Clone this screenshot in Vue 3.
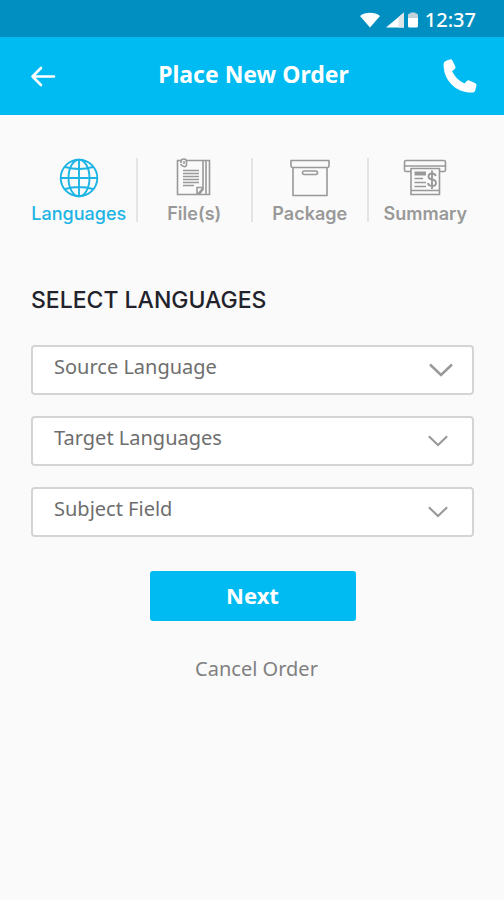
<script setup>
import { ref } from 'vue'

const steps = [
  { id: 'languages', label: 'Languages' },
  { id: 'files', label: 'File(s)' },
  { id: 'package', label: 'Package' },
  { id: 'summary', label: 'Summary' },
]
const current = ref('languages')

const fields = ref([
  { id: 'source', label: 'Source Language', value: '', large: true },
  { id: 'target', label: 'Target Languages', value: '', large: false },
  { id: 'subject', label: 'Subject Field', value: '', large: false },
])
</script>

<template>
  <div class="screen">
    <div class="status">
      <svg class="wifi" width="22" height="16" viewBox="0 0 22 16" aria-hidden="true">
        <path d="M1 4C6-.2 16-.2 21 4L11 15.500Z" fill="#fff" />
      </svg>
      <svg width="20" height="16" viewBox="0 0 20 16" aria-hidden="true">
        <path d="M1 15.500L19 0.500V15.500Z" fill="#fff" />
        <path d="M13.500 5.100L19 .5V15.500H13.500Z" fill="#dfe6ea" />
      </svg>
      <svg class="battery" width="12" height="16" viewBox="0 0 12 16" aria-hidden="true">
        <path d="M1 3Q1 1.500 2.500 1.500H3.500V.5H8.500V1.500H9.500Q11 1.500 11 3V6H1Z" fill="#c3d3dc" />
        <path d="M1 6H11V14Q11 15.500 9.500 15.500H2.500Q1 15.500 1 14Z" fill="#fff" />
      </svg>
      <span class="clock">12:37</span>
    </div>

    <header class="bar">
      <button class="icon-button" type="button" aria-label="Back">
        <svg width="26" height="22" viewBox="0 0 26 22" fill="none" stroke="#fff" stroke-width="2.600" stroke-linecap="round" stroke-linejoin="round">
          <path d="M24 11.500H2.500M11 3L2.500 11.500L11 20" />
        </svg>
      </button>
      <h1>Place New Order</h1>
      <button class="icon-button end" type="button" aria-label="Call">
        <svg width="34" height="34" viewBox="0 0 34 34" fill="#fff">
          <path d="M4.500 1.300L7 .4Q8.600 .1 9.400 1.500L12.300 7.600Q12.900 9 11.700 10.100L9.100 12.300C11.600 17.800 15.800 21.900 21.500 24.600L23.800 21.900Q24.800 20.800 26.200 21.400L32.400 24.200Q33.700 24.900 33.500 26.300L32.200 31.400Q31.700 33.200 29.800 33.400C13.500 34.300.2 21.500.6 5.200Q.7 2.400 4.500 1.300Z" />
        </svg>
      </button>
    </header>

    <nav class="steps" aria-label="Order steps">
      <button
        v-for="step in steps"
        :key="step.id"
        type="button"
        class="step"
        :class="{ active: step.id === current }"
        @click="current = step.id"
      >
        <svg v-if="step.id === 'languages'" width="40" height="40" viewBox="0 0 40 40" fill="none" stroke="currentColor" stroke-width="1.900">
          <circle cx="20" cy="20" r="18.300" />
          <ellipse cx="20" cy="20" rx="10.500" ry="18.300" />
          <path d="M20 1.700V38.300M1.700 20H38.300M6 9Q20 13 34 9M6 31Q20 27 34 31" />
        </svg>
        <svg v-else-if="step.id === 'files'" width="40" height="40" viewBox="0 0 40 40" fill="none" stroke="currentColor" stroke-width="1.600">
          <path d="M8 2.500H3.500V36.500H25L29 31.500V2.500H13M29 2.500H32V36.500H25M32 2.500H35.500V36.500H32" />
          <path d="M23 36V29.500H29M24 36L29 30" />
          <path d="M7 5V3.500Q7 1 9.800 1Q12.500 1 12.500 3.500V6.500Q12.500 9 10 8.500Q8 8 6.500 6M10 3V6" />
          <path d="M9 12.500H25M9 15.500H25M9 18.500H25M9 21.500H25M9 24.500H25M9 27.500H20" stroke-width="1.300" />
        </svg>
        <svg v-else-if="step.id === 'package'" width="40" height="40" viewBox="0 0 40 40" fill="none" stroke="currentColor" stroke-width="1.600" stroke-linejoin="round">
          <path d="M1 2.500H39V7.500Q39 9.500 37.500 9.500H2.500Q1 9.500 1 7.500Z" />
          <path d="M3 9.500V37.500H37V9.500" />
          <rect x="12.500" y="13" width="15" height="3.500" rx="1.700" />
        </svg>
        <svg v-else width="44" height="40" viewBox="0 0 44 40" fill="none" stroke="currentColor" stroke-width="1.600">
          <path d="M8 13.500H3Q1.500 13.500 1.500 12V4Q1.500 2.500 3 2.500H41Q42.500 2.500 42.500 4V12Q42.500 13.500 41 13.500H36M1.500 8H42.500" />
          <path d="M8 10V36.500H36.500V10M8 32.500H36.500M8 10.500H36.500" />
          <path d="M11.500 14.500H23M11.500 16.500H23" stroke-width="2" />
          <path d="M11.500 20.500H20M11.500 24.500H23M11.500 28.500H23" />
          <path d="M32.800 18Q32 15.500 29 15.500Q25.500 15.500 25.500 18.500Q25.500 21 29 21.500Q33 22 33 25Q33 28 29 28Q25.300 28 25 25M29 12.500V31" stroke-width="1.900" />
        </svg>
        <span>{{ step.label }}</span>
      </button>
    </nav>

    <main class="content">
      <h2>SELECT LANGUAGES</h2>
      <form class="form" @submit.prevent>
        <div v-for="field in fields" :key="field.id" class="field">
          <select :id="field.id" v-model="field.value" :aria-label="field.label">
            <option value="">{{ field.label }}</option>
          </select>
          <svg class="chevron" :class="{ large: field.large }" viewBox="0 0 24 14" fill="none" stroke="currentColor" stroke-width="2.500" aria-hidden="true">
            <path d="M1 1.500L12 12L23 1.500" />
          </svg>
        </div>
        <button class="next" type="submit">Next</button>
        <a class="cancel" href="#">Cancel Order</a>
      </form>
    </main>
  </div>
</template>

<style>
body {
  background: #fafafa;
}
</style>

<style scoped>
.screen {
  min-height: 100vh;
  background: #fafafa;
  font-family: "Noto Sans", "Open Sans", sans-serif;
}
button {
  border: 0;
  padding: 0;
  background: none;
  font: inherit;
  cursor: pointer;
}
svg {
  display: block;
  flex: none;
}
.status {
  display: flex;
  align-items: center;
  justify-content: flex-end;
  gap: 2px;
  height: 37px;
  padding: 3px 28px 0 0;
  box-sizing: border-box;
  background: #008fc0;
}
.wifi {
  margin-right: 2px;
}
.clock {
  margin-left: 4px;
  color: #fff;
  font-size: 20px;
  font-weight: 500;
  line-height: 24px;
}
.bar {
  display: grid;
  grid-template-columns: 48px 1fr 48px;
  align-items: center;
  height: 78px;
  padding: 0 27px 0 30px;
  background: #00bbf2;
}
.icon-button.end {
  justify-self: end;
}
h1 {
  margin: 0;
  padding-bottom: 4px;
  color: #fff;
  font-size: 23px;
  font-weight: 700;
  line-height: 30px;
  text-align: center;
}
.steps {
  display: grid;
  grid-template-columns: repeat(4, 1fr);
  padding: 43px 20px 0 22px;
}
.step {
  display: flex;
  flex-direction: column;
  align-items: center;
  gap: 5px;
  height: 64px;
  border-right: 2px solid #e4e4e4;
  color: #999;
  font-family: Inter, "Open Sans", sans-serif;
  font-size: 18px;
  font-weight: 600;
  line-height: 22px;
}
.step:last-child {
  border-right-color: transparent;
}
.step.active {
  color: #1cb4e4;
  font-weight: 500;
}
.content {
  padding: 64px 30px 0 31px;
}
h2 {
  margin: 0;
  color: #22222c;
  font-family: Inter, "Open Sans", sans-serif;
  font-size: 23px;
  font-weight: 500;
  line-height: 28px;
}
.form {
  display: flex;
  flex-direction: column;
  align-items: center;
  gap: 21px;
  padding-top: 31px;
}
.field {
  display: grid;
  align-items: center;
  width: 100%;
}
.field > * {
  grid-area: 1 / 1;
}
select {
  width: 100%;
  height: 50px;
  padding: 0 60px 6px 21px;
  border: 2px solid #d4d4d4;
  border-radius: 4px;
  appearance: none;
  background: #fff;
  color: #6e6e6e;
  font: 400 20px/28px "Noto Sans", "Open Sans", sans-serif;
}
.chevron {
  justify-self: end;
  width: 20px;
  margin-right: 26px;
  color: #999;
  pointer-events: none;
}
.chevron.large {
  width: 24px;
  margin-right: 21px;
}
.next {
  width: 206px;
  height: 50px;
  margin-top: 13px;
  padding-bottom: 2px;
  border-radius: 3px;
  background: #00bbf2;
  color: #fff;
  font-size: 22px;
  font-weight: 700;
}
.cancel {
  margin-top: 13px;
  padding-left: 8px;
  color: #808080;
  font-size: 20px;
  line-height: 28px;
  text-decoration: none;
}
</style>
